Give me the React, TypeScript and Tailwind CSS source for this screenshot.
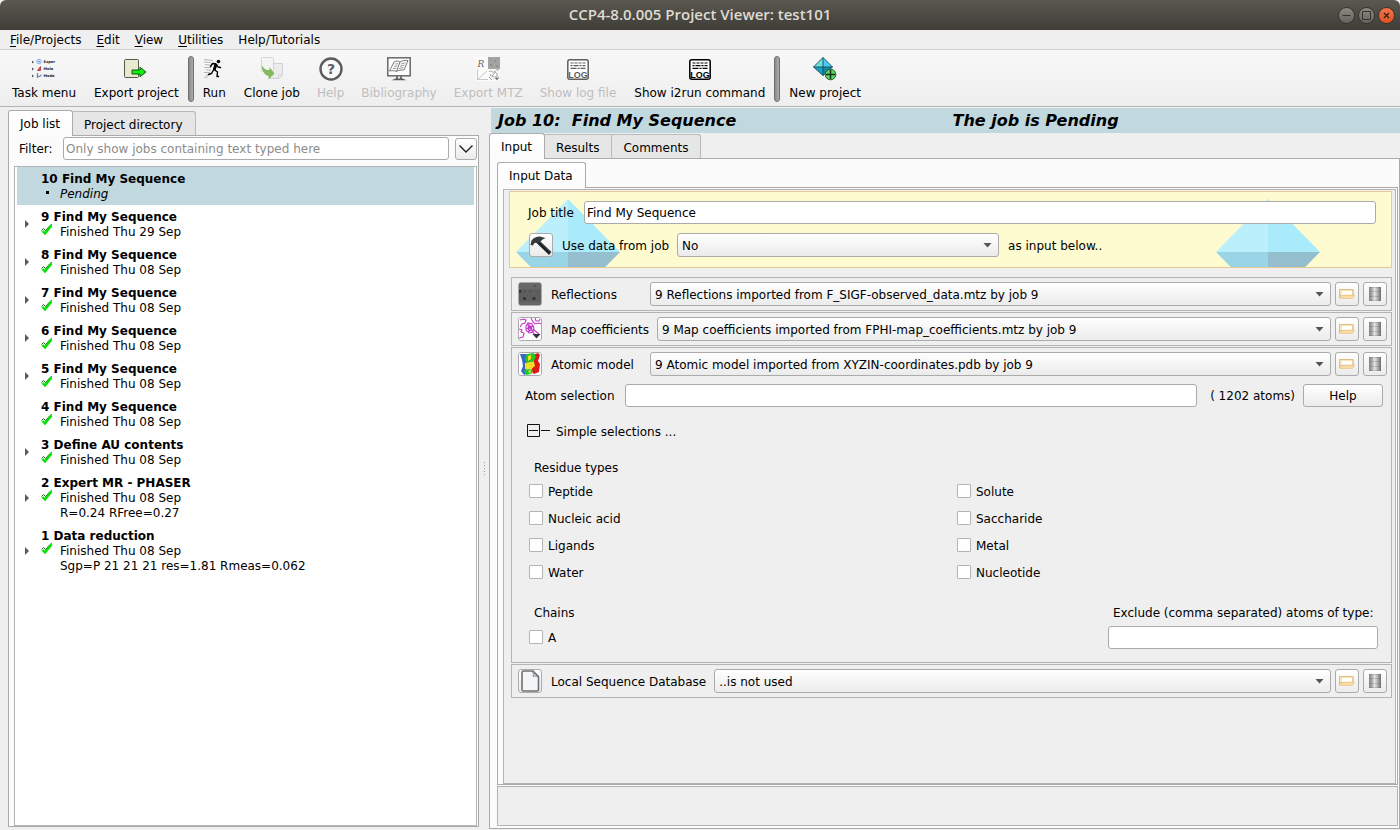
import type { ReactNode } from 'react';

type Job = { id: number; name: string; status: string; pending?: boolean; extra?: string; leaf?: boolean };

const jobs: Job[] = [
  { id: 10, name: 'Find My Sequence', status: 'Pending', pending: true, leaf: true },
  { id: 9, name: 'Find My Sequence', status: 'Finished Thu 29 Sep' },
  { id: 8, name: 'Find My Sequence', status: 'Finished Thu 08 Sep' },
  { id: 7, name: 'Find My Sequence', status: 'Finished Thu 08 Sep' },
  { id: 6, name: 'Find My Sequence', status: 'Finished Thu 08 Sep' },
  { id: 5, name: 'Find My Sequence', status: 'Finished Thu 08 Sep' },
  { id: 4, name: 'Find My Sequence', status: 'Finished Thu 08 Sep', leaf: true },
  { id: 3, name: 'Define AU contents', status: 'Finished Thu 08 Sep' },
  { id: 2, name: 'Expert MR - PHASER', status: 'Finished Thu 08 Sep', extra: 'R=0.24 RFree=0.27' },
  { id: 1, name: 'Data reduction', status: 'Finished Thu 08 Sep', extra: 'Sgp=P 21 21 21 res=1.81 Rmeas=0.062' },
];

const menus = [
  { key: 'F', rest: 'ile/Projects' },
  { key: 'E', rest: 'dit' },
  { key: 'V', rest: 'iew' },
  { key: 'U', rest: 'tilities' },
  { key: '', rest: 'Help/Tutorials' },
];

const raised = 'rounded-[3px] border border-[#ababab] bg-linear-to-b from-white to-[#ebebeb]';
const field = 'h-[23px] rounded-[3px] border border-[#ababab] bg-white px-[2px] text-[12px] placeholder:text-[#8c8c8c] outline-none';

/* ---------- toolbar icons ---------- */

function TaskMenuIcon() {
  return (
    <svg width="26" height="24" viewBox="0 0 26 24">
      <g fill="#555">
        <path d="M1 3.5l2 1.5-2 1.5zM1 10.500l2 1.500-2 1.500zM1 17.500l2 1.500-2 1.500z" />
      </g>
      <circle cx="8" cy="4.500" r="2.300" fill="#d6e6fb" stroke="#8fb4e8" />
      <circle cx="8" cy="4.500" r="0.800" fill="#557fd0" />
      <path d="M6.500 13.500l3-4v4z" fill="#e04a4a" stroke="#b03030" strokeWidth="0.800" />
      <path d="M6.500 16v5M6.500 19.500h2l2-1.500" fill="none" stroke="#6a7fae" strokeWidth="1.200" />
      <g fontFamily="DejaVu Sans" fontWeight="700" fontSize="3.600" fill="#1c1630">
        <text x="12.500" y="6">Exper</text>
        <text x="12.500" y="13">Mole</text>
        <text x="12.500" y="20">Mode</text>
      </g>
    </svg>
  );
}

function ExportIcon() {
  return (
    <svg width="24" height="24" viewBox="0 0 24 24">
      <rect x="0.500" y="2.500" width="14" height="18" rx="1" fill="#e8ead0" stroke="#55594c" />
      <path d="M8 13h8v-2.800l6 4.800-6 4.800V17H8z" fill="#0cf20c" stroke="#145214" />
    </svg>
  );
}

function RunIcon() {
  return (
    <svg width="20" height="24" viewBox="0 0 20 24">
      <g stroke="#b0b0b0" strokeWidth="0.900" fill="none">
        <path d="M0 2.500l9 1M0 5l7 .5M1 7.500l5 .5M0 10.500h7M2 13h5M0 15.500h6M2 18.500l3-.5M0 20.500l4-.5" />
      </g>
      <circle cx="14.500" cy="4.500" r="1.800" fill="#000" />
      <path d="M12 7L9.500 13M11.500 6.800L8.500 6.500L6.500 9.500M12.500 7.500L14 10L16.500 10.500M10 12.500L13.500 15L13 19.500H14.500M9.500 13L7.500 16.500L4.500 17.500" stroke="#000" strokeWidth="1.400" fill="none" strokeLinecap="round" strokeLinejoin="round" />
      <path d="M10.500 6.500l3 1-2 6-2.500-1z" fill="#000" />
    </svg>
  );
}

function CloneIcon() {
  return (
    <svg width="24" height="24" viewBox="0 0 24 24">
      <path d="M10 6.500h12.500v11.500l-4 3.500H10z" fill="#ececec" stroke="#d2d2d2" />
      <path d="M18.500 21.500l4-3.500h-4z" fill="#fff" stroke="#d0d0d0" />
      <rect x="1.500" y="0.500" width="12" height="14" rx="1" fill="#f4f4f4" stroke="#d6d6d6" />
      <path d="M2 8.500c1.500 3 4 5 7.500 4.500V10l5 6.500-6 6V19C4.500 18 1.500 13.500 2 8.500z" fill="#86b95e" />
    </svg>
  );
}

function HelpIcon() {
  return (
    <svg width="24" height="24" viewBox="0 0 24 24">
      <circle cx="12" cy="12" r="10.500" fill="#fafafa" stroke="#5c5c5c" strokeWidth="2.400" />
      <text x="12" y="17" textAnchor="middle" fontFamily="DejaVu Sans" fontWeight="700" fontSize="14" fill="#5c5c5c">?</text>
    </svg>
  );
}

function BibliographyIcon() {
  return (
    <svg width="24" height="24" viewBox="0 0 24 24">
      <rect x="0.800" y="0.800" width="22.400" height="18" fill="#fff" stroke="#686868" strokeWidth="1.500" />
      <path d="M7 5c2-1.200 4-1.200 6 0 2.500-1.500 5-1.800 8-1.500l-4 9.500c-3-.3-5.500.2-7.500 1.500-2-1-4-1-7-.5zM13 5l-3.500 9.500" fill="#fff" stroke="#777" />
      <path d="M7.800 7l3.500-.3M6.800 9.200l3.500-.2M5.800 11.500l3.500-.2M14 7l4.500-1.200M13 9.300l4.500-1.200M12 11.600l4.500-1.200" stroke="#999" />
      <path d="M10 19v3M14 19v3" stroke="#686868" strokeWidth="1.800" />
      <path d="M4.500 23.200l4-1.700h7l4 1.700z" fill="#5e5e5e" />
    </svg>
  );
}

function MtzIcon() {
  return (
    <svg width="24" height="24" viewBox="0 0 24 24">
      <rect width="24" height="24" fill="#fbfbfb" />
      <rect x="12" width="12" height="12" fill="#a3a3a3" />
      <path d="M14 8h2M20 9h2M14 3h1M18 4h2" stroke="#8a8a8a" strokeWidth="1.500" />
      <text x="1.500" y="9.500" fontFamily="DejaVu Serif" fontStyle="italic" fontSize="9" fill="#666">R</text>
      <path d="M1.500 12v10.500H12M1.500 22.500L11 14" stroke="#c6c6c6" fill="none" />
      <path d="M13 15c2-3 3 1 5 0s2-3 5-2M15 17c-2 2 1 3 2 1s3-4 4-1-3 4-5 2M19 22c1-2 4-3 4-1M13 20l3 3" stroke="#9a9a9a" fill="none" />
      <path d="M19 21h4l-2 2.500z" fill="#777" />
    </svg>
  );
}

function LogIcon({ color }: { color: string }) {
  return (
    <svg width="24" height="24" viewBox="0 0 24 24">
      <rect x="1.800" y="2.800" width="20.400" height="19.400" rx="2" fill="#fff" stroke={color} strokeWidth="1.500" />
      <path d="M4.500 6h15" stroke={color} strokeWidth="1.200" strokeDasharray="3 1 3 1" />
      <path d="M4.500 8.700h15" stroke={color} strokeWidth="1.200" strokeDasharray="2 1 5 1" />
      <path d="M4.500 11.400h15" stroke={color} strokeWidth="1.200" strokeDasharray="6 1 2 1" />
      <text x="12" y="20.500" textAnchor="middle" fontFamily="Liberation Sans" fontWeight="700" fontSize="9" fill={color}>LOG</text>
    </svg>
  );
}

function NewProjectIcon() {
  return (
    <svg width="24" height="24" viewBox="0 0 24 24">
      <path d="M10 0.500L0.500 10H10z" fill="#6fe0dc" />
      <path d="M10 0.500L19.500 10H10z" fill="#48cdf4" />
      <path d="M0.500 10L10 18.500V10z" fill="#1ca0c0" />
      <path d="M19.500 10L10 18.500V10z" fill="#1787ae" />
      <path d="M10 0.500L0.500 10 10 18.500 19.500 10zM10 0.500v18M0.500 10h19" fill="none" stroke="#14495c" strokeWidth="0.900" />
      <circle cx="17.500" cy="17.500" r="5.300" fill="#5fd35f" stroke="#1f5c22" />
      <path d="M17.500 13v9M13 17.500h9" stroke="#12331a" strokeWidth="1.500" />
    </svg>
  );
}

/* ---------- small icons ---------- */

function TickIcon() {
  return (
    <svg width="12" height="12" viewBox="0 0 12 12">
      <path d="M0.500 6.500L2.500 4.500 4.500 6.500 9 1.500 11 0.500" fill="none" stroke="#0b4d0b" strokeWidth="0.900" />
      <path d="M1.500 7L4 9.500 10.500 1.500" fill="none" stroke="#00e400" strokeWidth="2.400" />
    </svg>
  );
}

function HammerIcon() {
  return (
    <svg width="22" height="22" viewBox="0 0 22 22">
      <path d="M0.500 11L1.500 6.500C3.500 4 6.500 2.500 10 2.500L15.500 4 12.500 5.500 10.500 7.500 21.500 18 19 21 7.500 10C6.500 8.500 5 8.500 4 9.500L3 11.500z" fill="#333b3d" />
      <path d="M9 9l10.500 10.500" stroke="#14181a" strokeWidth="1.200" />
    </svg>
  );
}

function ReflectionsIcon() {
  return (
    <svg width="22" height="22" viewBox="0 0 22 22">
      <rect width="22" height="22" fill="#5e5e5e" />
      <path d="M0 0h22v6H0z" fill="#686868" />
      <path d="M0 19h22v3H0z" fill="#676767" />
      <g fill="#303030">
        <circle cx="1" cy="8.500" r="1.400" /><circle cx="5.500" cy="15.500" r="1.500" /><circle cx="15" cy="15.500" r="1.500" />
      </g>
      <g fill="#4c4c4c"><circle cx="6" cy="8.500" r="1" /><circle cx="11" cy="8.500" r="1" /><circle cx="16" cy="3" r="1" /></g>
    </svg>
  );
}

function MapIcon() {
  return (
    <svg width="22" height="22" viewBox="0 0 22 22">
      <rect width="22" height="22" fill="#fff" />
      <g fill="none" stroke="#c234c6" strokeWidth="1.100">
        <path d="M1 2l4-1 2 1-1 3-3 1-2 3M0 11l3 1-1 2 3 1-1 4-4 1M12 0l2 4 2 2 4-1 2 1M16 0l1 3 3 0 1-2" />
        <path d="M7 8l2-3 4 1 2 4-1 4-4 1-3-3zM9 9l3-1 1 4-3 1zM8 6l6 8M7 11l8-3M10 5l0 9M14 14l2 3 4 0M15 12l5 4" />
      </g>
      <path d="M13.500 16h8l-4 4.500z" fill="#333" />
    </svg>
  );
}

function ModelIcon() {
  return (
    <svg width="22" height="22" viewBox="0 0 22 22">
      <rect width="22" height="22" fill="#fff" />
      <path d="M1 1h7l-1 5 2 6-2 3 2 5-4 2-3-4 2-5-1-6z" fill="#3d66cc" />
      <path d="M19 0l2 2-2 6 2 3-1 8-5 2-3-3 2-6 1-6 1-5z" fill="#e01818" />
      <path d="M8 1l7-1 2 4-3 5-6 1-2-4z" fill="#1fc822" />
      <path d="M6 10l9-1 1 4-4 3-6 0z" fill="#f2e01c" />
      <path d="M5 17l6-1 3 2-2 3-5 1z" fill="#1fc822" />
      <path d="M9 3l3-1 0 4-3 2zM9 18l3-1-1 4z" fill="#f2e01c" />
    </svg>
  );
}

function PageIcon() {
  return (
    <svg width="22" height="22" viewBox="0 0 22 22">
      <path d="M4.500 1h9.500l5.500 5.500V19.500a1.500 1.500 0 0 1-1.500 1.500H4.500A1.500 1.500 0 0 1 3 19.500V2.500A1.500 1.500 0 0 1 4.500 1z" fill="#f3f5f6" stroke="#6d7173" strokeWidth="1.600" />
      <path d="M13 1.500c1.500 1 1.500 3 1 5 2-.5 4-.5 5.500 1z" fill="#c5d0d4" stroke="#7d8284" strokeWidth="0.700" />
    </svg>
  );
}

function FolderIcon() {
  return (
    <svg width="16" height="10" viewBox="0 0 16 10">
      <path d="M0.500 9V0.500h13.500V6" fill="#fbe3b8" stroke="#dfbd86" />
      <path d="M0.500 0.500h13.500v6H0.500z" fill="#fbe3b8" stroke="#dfbd86" />
      <path d="M3 2h10v4H2.500z" fill="#fff" />
      <path d="M0.800 9.400l2-3.200H15.500L13.500 9.400z" fill="#fcdda6" stroke="#e4c085" strokeWidth="0.700" />
    </svg>
  );
}

function DatabaseIcon() {
  return (
    <svg width="14" height="14" viewBox="0 0 14 14">
      <defs>
        <linearGradient id="steel" x1="0" x2="1" y1="0" y2="0">
          <stop offset="0" stopColor="#868686" /><stop offset="0.250" stopColor="#a8a8a8" /><stop offset="0.450" stopColor="#e6e6e6" /><stop offset="0.700" stopColor="#b4b4b4" /><stop offset="1" stopColor="#6e6e6e" />
        </linearGradient>
      </defs>
      <rect x="1" width="12" height="14" fill="url(#steel)" />
      <path d="M1 0.500h12M1 4.500h12M1 9.500h12M1 13.500h12" stroke="#555" strokeOpacity="0.220" />
    </svg>
  );
}

function Crystal() {
  return (
    <svg width="104" height="68" viewBox="0 0 104 68" className="block">
      <path d="M52 0L0 53h52z" fill="#bceffc" />
      <path d="M52 0l52 53H52z" fill="#a9eafb" />
      <path d="M0 53h52v53z" fill="#9ad4e7" />
      <path d="M104 53H52v53z" fill="#95bfce" />
    </svg>
  );
}

/* ---------- widgets ---------- */

function ToolButton({ label, icon, disabled }: { label: string; icon: ReactNode; disabled?: boolean }) {
  return (
    <button type="button" disabled={disabled} className="flex flex-col items-center gap-[5px] px-[9px] disabled:pl-[8px] disabled:text-[#bebebe]">
      <span className="flex h-6 items-center">{icon}</span>
      <span className="leading-[15px]">{label}</span>
    </button>
  );
}

function ToolSeparator() {
  return <div className="h-[46px] w-[6px] rounded-[3px] border border-[#6f6f6f] bg-linear-to-r from-[#8b8b8b] to-[#adadad]" />;
}

function Tab({ children, active }: { children: ReactNode; active?: boolean }) {
  return active ? (
    <button type="button" role="tab" aria-selected="true" className="relative z-10 -mb-px h-[26px] rounded-t-[3px] border border-b-0 border-[#ababab] bg-linear-to-b from-white to-[#fbfbfb] pr-[12px] pl-[11px]">
      {children}
    </button>
  ) : (
    <button type="button" role="tab" aria-selected="false" className="h-[24px] border border-b-0 border-l-0 border-[#b9b9b9] bg-[#e6e6e6] pt-[2px] pr-[12px] pl-[11px] last:rounded-tr-[3px]">
      {children}
    </button>
  );
}

function Select({ id, value, className }: { id: string; value: string; className: string }) {
  return (
    <div className={'relative flex ' + className}>
      <select id={id} defaultValue={value} className={'h-6 w-full appearance-none pt-[2px] pr-6 pl-[4px] text-[12px] outline-none ' + raised}>
        <option>{value}</option>
      </select>
      <svg width="9" height="5" viewBox="0 0 9 5" className="pointer-events-none absolute top-[10px] right-[7px]">
        <path d="M0.500 0h8l-4 4.500z" fill="#555" />
      </svg>
    </div>
  );
}

function IconButton({ label, children }: { label: string; children: ReactNode }) {
  return (
    <button type="button" aria-label={label} className={'flex size-6 shrink-0 items-center justify-center overflow-hidden ' + raised}>
      {children}
    </button>
  );
}

function DataRow({ id, label, value, icon }: { id: string; label: string; value: string; icon: ReactNode }) {
  return (
    <div className="flex items-center gap-[4px]">
      <IconButton label={label + ' menu'}>{icon}</IconButton>
      <label htmlFor={id} className="ml-[5px] min-w-[95px] pt-[2px] pr-[4px]">{label}</label>
      <Select id={id} value={value} className="flex-1" />
      <IconButton label={'Browse ' + label}><FolderIcon /></IconButton>
      <IconButton label={'Database ' + label}><DatabaseIcon /></IconButton>
    </div>
  );
}

function Check({ label }: { label: string }) {
  return (
    <label className="flex h-[27px] items-center gap-[5px]">
      <input type="checkbox" className="size-[14px] appearance-none rounded-[1px] border border-[#b4b4b4] bg-white" />
      <span className="pt-[2px]">{label}</span>
    </label>
  );
}

const group = 'border border-[#b4b4b4] py-[4px] pr-[4px] pl-[6px]';

function JobItem({ job }: { job: Job }) {
  return (
    <li className={'flex items-center pt-[5px] pb-[3px] leading-[15px] ' + (job.pending ? 'bg-[#c1d8df]' : '')}>
      <span className="flex w-6 shrink-0 pb-[2px] pl-[8px]">
        {!job.leaf && (
          <svg width="5" height="8" viewBox="0 0 5 8"><path d="M0 0v8L4 4z" fill="#5a5a5a" /></svg>
        )}
      </span>
      <div>
        <div className="font-bold">{job.id} {job.name}</div>
        <div className="flex">
          <span className="-mt-px flex w-[19px]">
            {job.pending ? <span className="mt-[5px] ml-[5px] size-[3px] bg-black" /> : <TickIcon />}
          </span>
          <span className={job.pending ? 'italic' : ''}>{job.status}</span>
        </div>
        {job.extra && <div className="pl-[19px]">{job.extra}</div>}
      </div>
    </li>
  );
}

/* ---------- page ---------- */

export default function App() {
  return (
    <div className="flex min-h-screen flex-col bg-[#efefef] font-['DejaVu_Sans',sans-serif] text-[12px] text-black">
      <header className="grid h-[30px] grid-cols-[1fr_auto_1fr] items-center rounded-t-[6px] bg-linear-to-b from-[#5b584f] to-[#3e3d38]">
        <h1 className="col-start-2 pb-px font-['Open_Sans',sans-serif] text-[15px] font-semibold text-[#dfdbd2]">CCP4-8.0.005 Project Viewer: test101</h1>
        <div className="flex justify-end gap-[3px] pr-[5px]">
          <button type="button" aria-label="Minimize" className="flex size-[17px] items-center justify-center rounded-full border border-[#33322d] bg-linear-to-b from-[#8b8980] to-[#65635b]">
            <svg width="9" height="9" viewBox="0 0 9 9"><path d="M0.500 4.500h8" stroke="#33322d" /></svg>
          </button>
          <button type="button" aria-label="Maximize" className="flex size-[17px] items-center justify-center rounded-full border border-[#33322d] bg-linear-to-b from-[#8b8980] to-[#65635b]">
            <svg width="9" height="9" viewBox="0 0 9 9"><path d="M0.500 0.500h8v8h-8z" fill="none" stroke="#33322d" /></svg>
          </button>
          <button type="button" aria-label="Close" className="flex size-[17px] items-center justify-center rounded-full border border-[#33322d] bg-linear-to-b from-[#f4744a] to-[#e2501f]">
            <svg width="9" height="9" viewBox="0 0 9 9"><path d="M2 2l5 5M7 2L2 7" stroke="#33200f" strokeWidth="1.300" /></svg>
          </button>
        </div>
      </header>

      <nav className="flex h-5 items-center gap-px border-b border-[#d0d0d0] px-[3px]">
        {menus.map((m) => (
          <button key={m.rest} type="button" className="px-[7px]">
            <span className="underline underline-offset-2">{m.key}</span>{m.rest}
          </button>
        ))}
      </nav>

      <div className="flex h-[57px] items-center border-b border-[#b4b4b4] bg-linear-to-b from-[#f8f8f8] to-[#eeeeee] px-[3px] pt-px">
        <ToolButton label="Task menu" icon={<TaskMenuIcon />} />
        <ToolButton label="Export project" icon={<ExportIcon />} />
        <ToolSeparator />
        <ToolButton label="Run" icon={<RunIcon />} />
        <ToolButton label="Clone job" icon={<CloneIcon />} />
        <ToolButton label="Help" icon={<HelpIcon />} disabled />
        <ToolButton label="Bibliography" icon={<BibliographyIcon />} disabled />
        <ToolButton label="Export MTZ" icon={<MtzIcon />} disabled />
        <ToolButton label="Show log file" icon={<LogIcon color="#5e5e5e" />} disabled />
        <ToolButton label="Show i2run command" icon={<LogIcon color="#000" />} />
        <ToolSeparator />
        <ToolButton label="New project" icon={<NewProjectIcon />} />
      </div>

      <main className="flex flex-1">
        <aside className="flex w-[479px] shrink-0 flex-col pt-[3px] pb-[3px] pl-[8px]">
          <div role="tablist" className="flex items-end">
            <Tab active>Job list</Tab>
            <Tab>Project directory</Tab>
          </div>
          <div className="flex flex-1 flex-col border border-[#ababab] bg-[#fbfbfb] pr-px pl-[5px]">
            <div className="flex items-center pt-px">
              <label htmlFor="filter" className="w-[49px] pl-[5px]">Filter:</label>
              <input id="filter" type="text" placeholder="Only show jobs containing text typed here" className={'min-w-0 flex-1 ' + field} />
              <button type="button" aria-label="Filter options" className={'ml-[6px] flex size-[22px] items-center justify-center ' + raised}>
                <svg width="14" height="8" viewBox="0 0 14 8"><path d="M0.500 0.500L7 7l6.500-6.500" fill="none" stroke="#222" strokeWidth="1.400" /></svg>
              </button>
            </div>
            <ul className="mt-[6px] flex-1 border border-[#b4b4b4] bg-white px-[2px]">
              {jobs.map((j) => <JobItem key={j.id} job={j} />)}
            </ul>
          </div>
        </aside>

        <div className="flex w-[10px] shrink-0 flex-col items-center justify-center gap-[2px]">
          {[0, 1, 2, 3, 4].map((n) => <span key={n} className="size-px bg-[#a0a0a0]" />)}
        </div>

        <section className="flex min-w-0 flex-1 flex-col pb-px">
          <h2 className="mt-px ml-[2px] grid h-[25px] grid-cols-2 items-center bg-[#c1d8df] text-[16px] font-bold italic">
            <span className="pl-[7px] whitespace-pre">Job 10:  Find My Sequence</span>
            <span className="pl-[7px]">The job is Pending</span>
          </h2>
          <div role="tablist" className="flex items-end">
            <Tab active>Input</Tab>
            <Tab>Results</Tab>
            <Tab>Comments</Tab>
          </div>
          <div className="flex flex-1 flex-col border border-[#ababab] bg-[#fbfbfb] pt-[3px] pr-px pb-[2px] pl-[7px]">
            <div role="tablist" className="flex items-end">
              <Tab active>Input Data</Tab>
            </div>
            <div className="flex flex-1 flex-col border border-[#ababab] pt-px pr-px pl-[5px]">
              <form className="flex flex-1 flex-col border border-[#b4b4b4] bg-[#efefef] pt-px pr-[3px] pl-[5px]">
                <div className="relative overflow-hidden border border-[#e6c996] bg-[#fdfbcf] pt-[9px] pr-[15px] pb-[10px] pl-[18px]">
                  <div className="pointer-events-none absolute inset-x-[6px] top-[7px] flex justify-between pr-[65px]">
                    <Crystal />
                    <Crystal />
                  </div>
                  <div className="relative flex items-center">
                    <label htmlFor="title" className="w-[56px]">Job title</label>
                    <input id="title" type="text" defaultValue="Find My Sequence" className={'min-w-0 flex-1 ' + field} />
                  </div>
                  <div className="relative mt-[9px] flex items-center pl-px">
                    <IconButton label="Build"><HammerIcon /></IconButton>
                    <label htmlFor="source" className="mr-[8px] ml-[9px] pt-[2px]">Use data from job</label>
                    <Select id="source" value="No" className="w-[322px]" />
                    <span className="ml-[9px] pt-[2px]">as input below..</span>
                  </div>
                </div>

                <div className="mt-[9px] flex flex-col gap-px pl-[2px]">
                  <div className={group}>
                    <DataRow id="refl" label="Reflections" value="9 Reflections imported from F_SIGF-observed_data.mtz by job 9" icon={<ReflectionsIcon />} />
                  </div>
                  <div className={group}>
                    <DataRow id="map" label="Map coefficients" value="9 Map coefficients imported from FPHI-map_coefficients.mtz by job 9" icon={<MapIcon />} />
                  </div>
                  <div className={group}>
                    <DataRow id="model" label="Atomic model" value="9 Atomic model imported from XYZIN-coordinates.pdb by job 9" icon={<ModelIcon />} />
                    <div className="mt-[8px] flex items-center pr-[4px] pl-[7px]">
                      <label htmlFor="atoms" className="w-[100px]">Atom selection</label>
                      <input id="atoms" type="text" className={'min-w-0 flex-1 ' + field} />
                      <span className="mx-[8px] pl-[5px]">( 1202 atoms)</span>
                      <button type="button" className={'h-[23px] w-[80px] ' + raised}>Help</button>
                    </div>
                    <button type="button" className="mt-[16px] ml-[9px] flex items-start">
                      <svg width="23" height="13" viewBox="0 0 23 13" className="mt-px mr-[6px]">
                        <path d="M0.500 0.500h12v12h-12zM2 6.500h9M14 6.500h9" fill="none" stroke="#111" />
                      </svg>
                      Simple selections ...
                    </button>
                    <div className="mt-[18px] pl-[16px]">Residue types</div>
                    <div className="grid grid-flow-col grid-cols-2 grid-rows-4 pr-[2px] pl-[11px]">
                      <Check label="Peptide" />
                      <Check label="Nucleic acid" />
                      <Check label="Ligands" />
                      <Check label="Water" />
                      <Check label="Solute" />
                      <Check label="Saccharide" />
                      <Check label="Metal" />
                      <Check label="Nucleotide" />
                    </div>
                    <div className="mt-[19px] mb-[8px] flex justify-between pr-[9px] pl-[11px]">
                      <div>
                        <div className="pl-[5px] leading-[18px]">Chains</div>
                        <div className="mt-px"><Check label="A" /></div>
                      </div>
                      <div className="flex w-[270px] flex-col">
                        <label htmlFor="exclude" className="pl-[5px] leading-[18px] whitespace-nowrap">Exclude (comma separated) atoms of type:</label>
                        <input id="exclude" type="text" className={'mt-[4px] w-full ' + field} />
                      </div>
                    </div>
                  </div>
                  <div className={group}>
                    <DataRow id="seq" label="Local Sequence Database" value="..is not used" icon={<PageIcon />} />
                  </div>
                </div>
              </form>
            </div>
            <footer className="mt-px h-[40px] border border-[#b4b4b4] bg-[#efefef]" />
          </div>
        </section>
      </main>
    </div>
  );
}
